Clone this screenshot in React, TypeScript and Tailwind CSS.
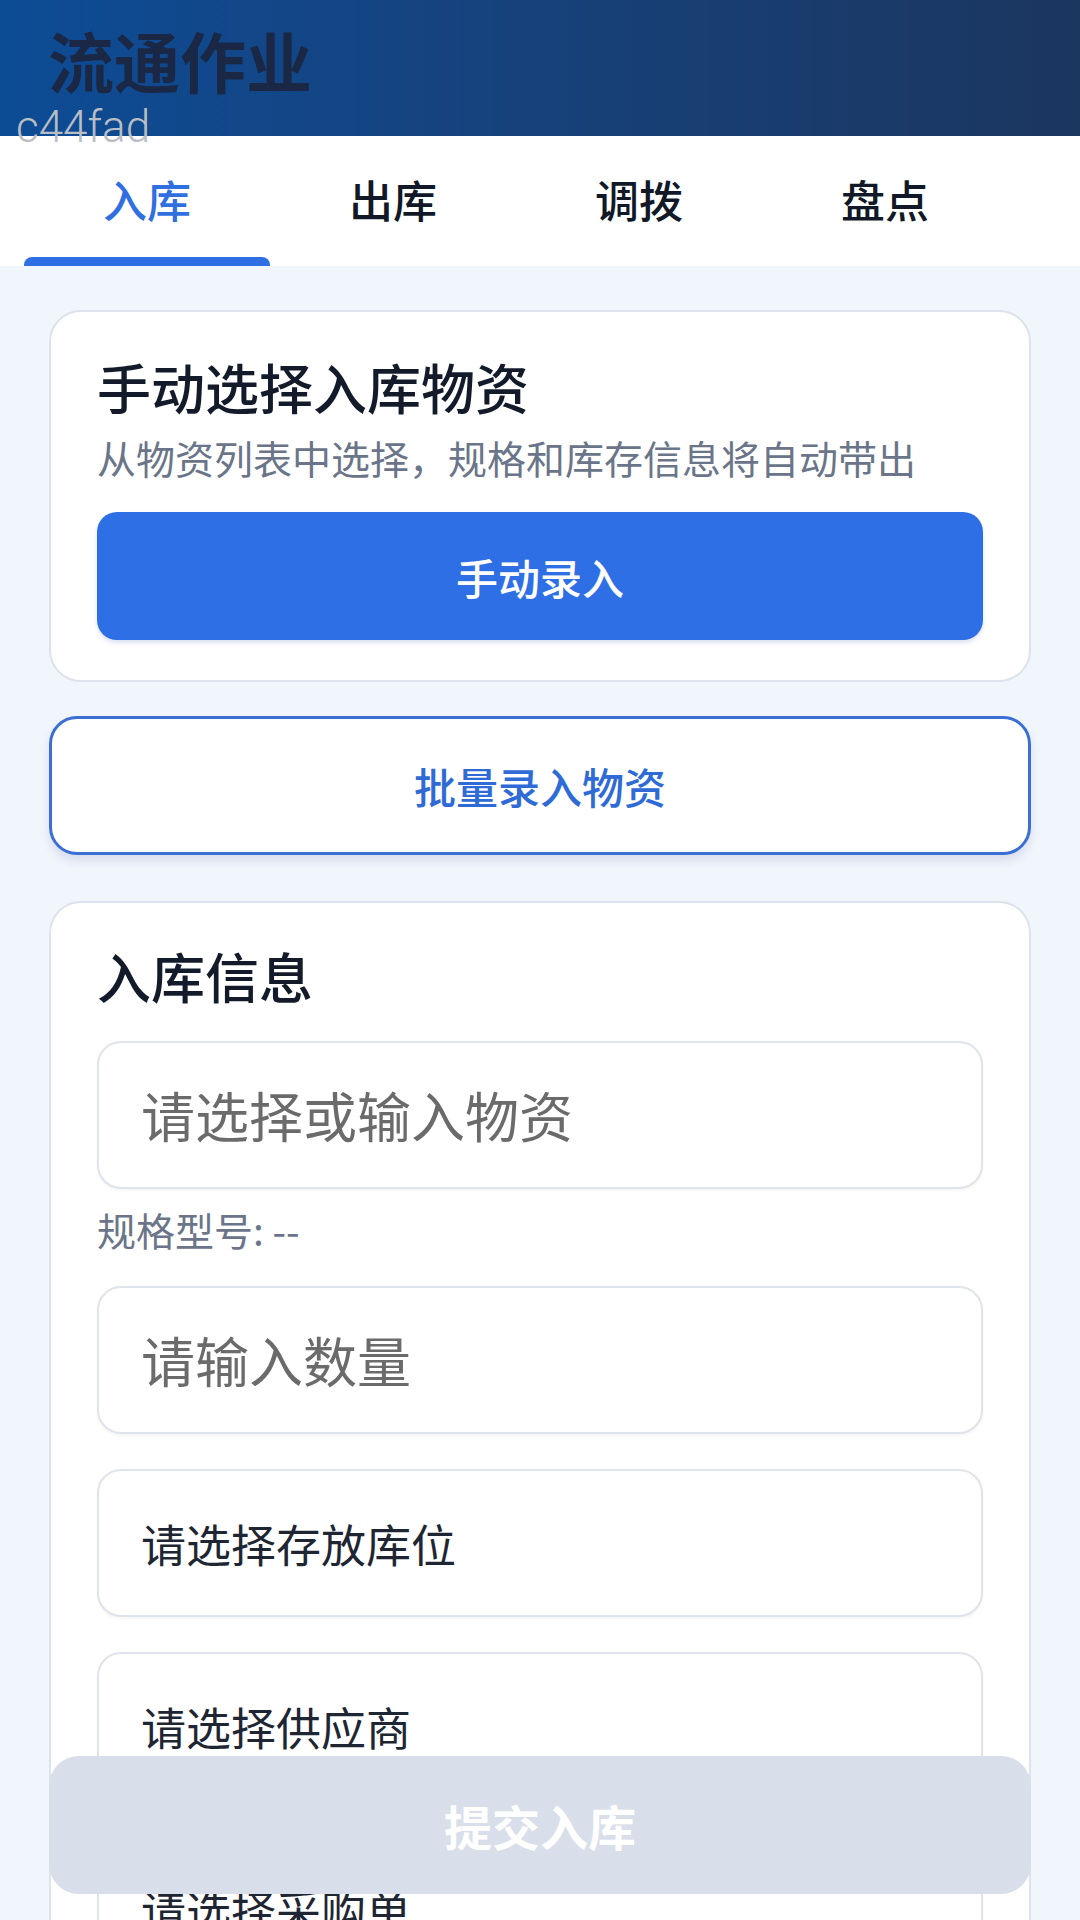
import React from 'react'

const cjk = { fontFamily: '"Noto Sans CJK SC", "Noto Sans", sans-serif' }

const tabs = ['入库', '出库', '调拨', '盘点']

const Field: React.FC<{ text: string; big?: boolean; className?: string }> = ({ text, big, className = '' }) => (
  <div
    className={`h-[148px] rounded-[24px] border-2 border-[#dfe3ea] bg-white pl-[42px] flex items-center shadow-[0_2px_3px_rgba(15,23,42,0.04)] ${className}`}
  >
    {big ? (
      <span className="text-[54px] leading-none text-[#6b6b6b]">{text}</span>
    ) : (
      <span className="text-[45px] leading-none text-[#1f2633]">{text}</span>
    )}
  </div>
)

export default function App() {
  return (
    <div className="relative min-h-[1920px] w-[1080px] overflow-hidden bg-[#f1f5fc]" style={cjk}>
      {/* Header */}
      <div className="h-[136px] bg-gradient-to-r from-[#0c4c96] to-[#1b365f] pl-[48px] pt-[20px]">
        <h1 className="text-[66px] leading-[1.2] font-bold text-[#1a2745]">流通作业</h1>
      </div>
      <span
        className="absolute left-[16px] top-[105px] z-10 text-[44px] leading-[44px] font-light text-[#b9bdc4]"
        style={{ fontFamily: 'Roboto, "Noto Sans", sans-serif' }}
      >
        c44fad
      </span>

      {/* Tabs */}
      <div className="h-[130px] bg-white flex pl-[24px]">
        {tabs.map((t, i) => (
          <div key={t} className="relative w-[246px] flex items-center justify-center">
            <span
              className={`text-[44px] leading-none font-medium pb-[4px] ${
                i === 0 ? 'text-[#2f6fe0]' : 'text-[#111827]'
              }`}
            >
              {t}
            </span>
            {i === 0 && (
              <div className="absolute left-0 right-0 bottom-0 h-[9px] rounded-t-[8px] bg-[#2f6fe4]" />
            )}
          </div>
        ))}
      </div>

      {/* Content */}
      <div className="px-[49px] pt-[44px] flex flex-col">
        {/* Manual select card */}
        <div className="rounded-[32px] border-2 border-[#dde3ec] bg-white px-[46px] pt-[40px] pb-[40px]">
          <h2 className="text-[54px] leading-[70px] font-medium text-[#131a2a]">手动选择入库物资</h2>
          <p className="mt-[8px] text-[39px] leading-[55px] text-[#6b7589]">
            从物资列表中选择，规格和库存信息将自动带出
          </p>
          <button className="mt-[27px] w-full h-[128px] rounded-[20px] bg-[#2f6fe6] text-white text-[42px] font-medium shadow-[0_3px_4px_rgba(30,64,175,0.15)]">
            手动录入
          </button>
        </div>

        {/* Batch entry */}
        <button className="mt-[34px] h-[139px] rounded-[28px] border-[3px] border-[#3b6fd4] bg-white text-[42px] font-medium text-[#2f6bd6] shadow-[0_6px_10px_rgba(30,58,138,0.12)]">
          批量录入物资
        </button>

        {/* Info card */}
        <div className="mt-[46px] rounded-[32px] border-2 border-[#dde3ec] bg-white px-[46px] pt-[38px] pb-[200px]">
          <h2 className="text-[54px] leading-[70px] font-medium text-[#131a2a]">入库信息</h2>
          <Field text="请选择或输入物资" big className="mt-[30px]" />
          <p className="mt-[13px] text-[39px] leading-[55px] text-[#6b7589]">规格型号: --</p>
          <Field text="请输入数量" big className="mt-[29px]" />
          <Field text="请选择存放库位" className="mt-[35px]" />
          <Field text="请选择供应商" className="mt-[35px]" />
          <Field text="请选择采购单" className="mt-[35px]" />
        </div>
      </div>

      {/* Submit */}
      <button className="fixed left-[49px] right-[49px] bottom-[26px] h-[138px] rounded-[30px] bg-[#d9dfea] text-white text-[48px] font-bold z-20">
        提交入库
      </button>
    </div>
  )
}
